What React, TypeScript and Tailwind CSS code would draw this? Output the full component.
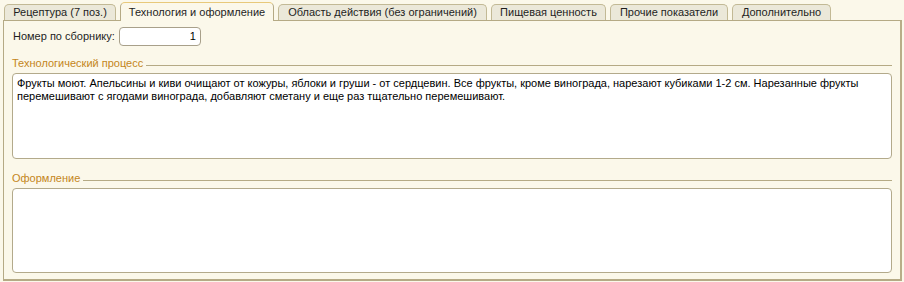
const tabs = [
  { label: "Рецептура (7 поз.)", w: "w-[112px]" },
  { label: "Технология и оформление", w: "w-[154px]", active: true },
  { label: "Область действия (без ограничений)", w: "w-[209px]" },
  { label: "Пищевая ценность", w: "w-[115px]" },
  { label: "Прочие показатели", w: "w-[118px]" },
  { label: "Дополнительно", w: "w-[99px]" },
];

function Group({ title, text, h }: { title: string; text?: string; h: string }) {
  return (
    <div className="flex flex-col">
      <div className="flex items-center gap-[3px] h-[13px]">
        <span className="text-[#c4861a] leading-[13px]">{title}</span>
        <div className="flex-1 h-px bg-[#b5aa85] mt-[3px]" />
      </div>
      <div
        className={`mt-[3px] ${h} bg-white border border-[#b3aa8b] rounded-[4px] px-[4px] pt-[3px] leading-[13px] text-black`}
      >
        {text}
      </div>
    </div>
  );
}

export default function App() {
  return (
    <div
      className="w-[904px] h-[282px] bg-[#fbf8ea] text-[11px] text-[#1e1e1e]"
      style={{ fontFamily: '"Liberation Sans", Arial, sans-serif' }}
    >
      <div className="flex items-end h-[20px] pl-[4px] gap-[4px]">
        {tabs.map((t) =>
          t.active ? (
            <div
              key={t.label}
              className={`${t.w} h-[19px] -mb-px relative z-10 bg-[#fbf8ea] border border-b-0 border-[#b5aa85] border-t-[#e8c97a] rounded-t-[5px] flex items-center justify-center`}
            >
              {t.label}
            </div>
          ) : (
            <div
              key={t.label}
              className={`${t.w} h-[16px] bg-[#ebe8d9] border border-b-0 border-[#c2b995] rounded-t-[5px] flex items-center justify-center`}
            >
              {t.label}
            </div>
          )
        )}
      </div>
      <div className="ml-[3px] w-[899px] h-[261px] border-2 border-t border-l border-[#b5aa85] border-r-[#b8ae88] px-[8px] pt-[6px]">
        <div className="flex items-center h-[19px]">
          <span className="ml-px">Номер по сборнику:</span>
          <div className="ml-[4px] w-[82px] h-[19px] bg-white border border-[#a8a08a] rounded-[4px] flex items-center justify-end pr-[4px] text-black">
            1
          </div>
        </div>
        <div className="mt-[11px] flex flex-col gap-[13px]">
          <Group
            h="h-[86px]"
            title="Технологический процесс"
            text="Фрукты моют. Апельсины и киви очищают от кожуры, яблоки и груши - от сердцевин. Все фрукты, кроме винограда, нарезают кубиками 1-2 см. Нарезанные фрукты перемешивают с ягодами винограда, добавляют сметану и еще раз тщательно перемешивают."
          />
          <Group h="h-[85px]" title="Оформление" />
        </div>
      </div>
    </div>
  );
}
